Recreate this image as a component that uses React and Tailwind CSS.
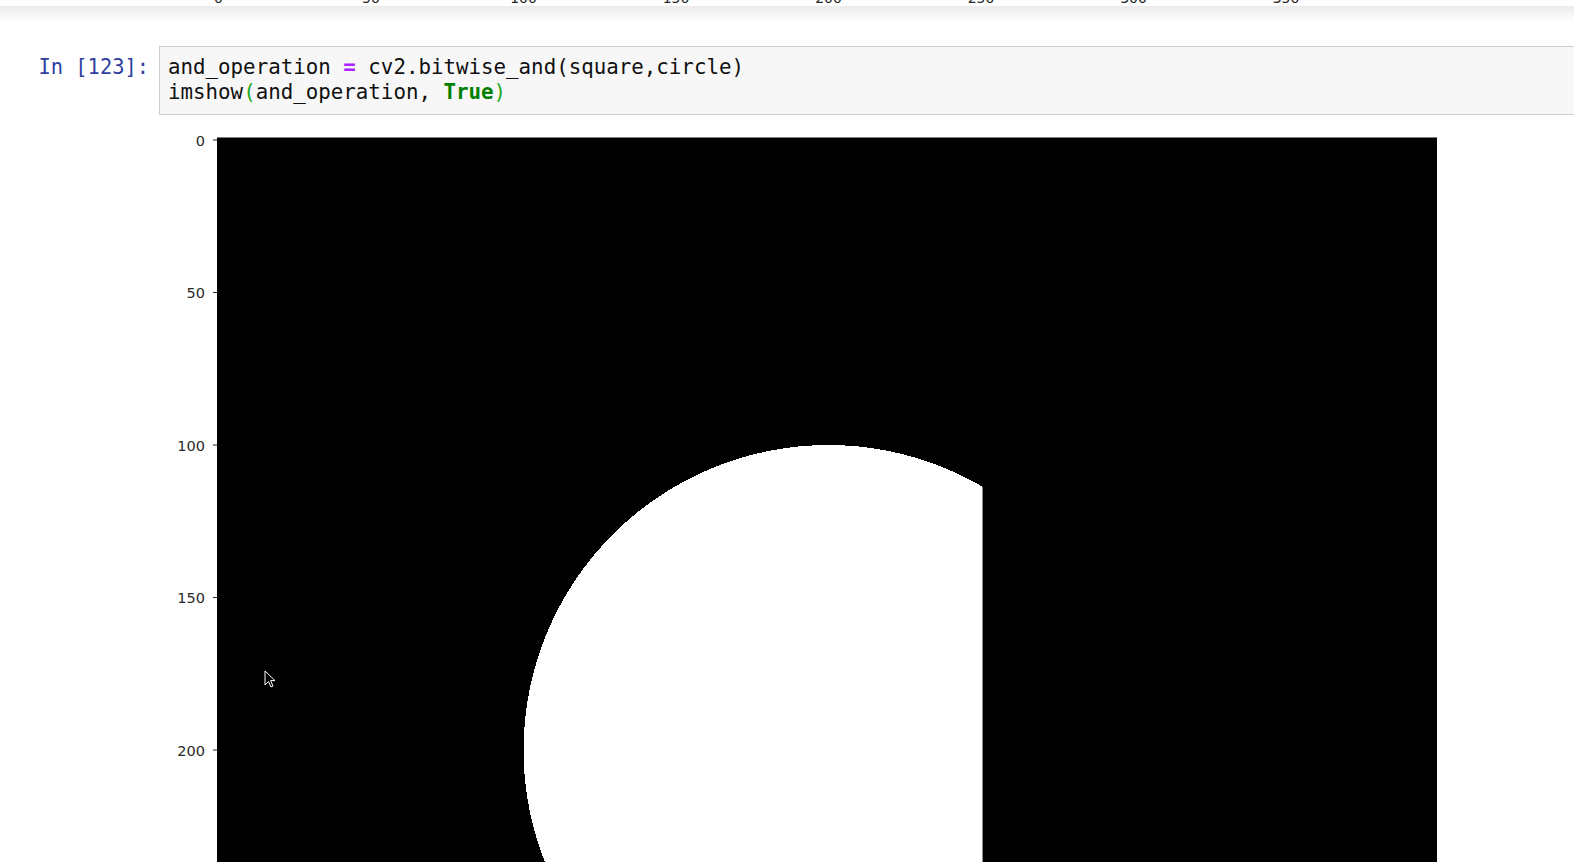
import React from "react";

const S = 3.05;
const OX = 217;
const OY = 138.5; // page y of image row 0 top edge
const SVG_TOP = 125;

function TopStrip() {
  const xs = [0, 50, 100, 150, 200, 250, 300, 350];
  return (
    <div className="h-[6px] overflow-hidden bg-white">
      <svg width="1574" height="6" className="block">
        {xs.map((v) => (
          <text
            key={v}
            x={OX + (v + 0.5) * S}
            y={5.8}
            textAnchor="middle"
            fontFamily="DejaVu Sans, sans-serif"
            fontSize="14"
            fill="#262626"
            transform={`translate(0 -3)`}
          >
            {v}
          </text>
        ))}
      </svg>
    </div>
  );
}

function Plot() {
  const ticks = [0, 50, 100, 150, 200];
  const top = OY - SVG_TOP;
  const cx = OX + 200.5 * S;
  const cy = top + 200.5 * S;
  return (
    <svg width="1574" height="737" className="block">
      <defs>
        <clipPath id="sq">
          <rect x={OX + 50 * S} y={top + 50 * S} width={201 * S} height={201 * S} />
        </clipPath>
      </defs>
      <rect x={OX} y={top - 1} width={400 * S} height={400 * S + 1} fill="#000" />
      <circle cx={cx} cy={cy} r={100 * S} fill="#fff" clipPath="url(#sq)" shapeRendering="crispEdges" />
      {ticks.map((t) => {
        const y = top + (t + 0.5) * S;
        return (
          <g key={t}>
            <line x1={OX - 4} x2={OX} y1={y} y2={y} stroke="#222" strokeWidth="1" />
            <text
              x={205}
              y={y + 5.5}
              textAnchor="end"
              fontFamily="DejaVu Sans, sans-serif"
              fontSize="14.5"
              fill="#2a2a2a"
            >
              {t}
            </text>
          </g>
        );
      })}
    </svg>
  );
}

export default function App() {
  const mono = { fontFamily: '"DejaVu Sans Mono", "Liberation Mono", monospace' };
  return (
    <div className="relative w-[1574px] h-[862px] overflow-hidden bg-white">
      <TopStrip />
      <div className="h-[16px] bg-linear-to-b from-[#ebebeb] to-white" />
      <div className="mt-[24px] flex items-start">
        <div
          className="w-[159px] pr-[10px] pt-[9px] text-right text-[20.4px] leading-[25px] text-[#303F9F] whitespace-pre"
          style={mono}
        >
          In [123]:
        </div>
        <div className="flex-1 mr-[-12px] border border-[#cfcfcf] bg-[#f7f7f7] pl-[8px] pt-[8px] pb-[9px]">
          <div className="text-[20.8px] leading-[25px] text-[#111] whitespace-pre" style={mono}>
            <div>
              and_operation <span className="font-bold text-[#AA22FF]">=</span> cv2.bitwise_and(square,circle)
            </div>
            <div>
              imshow<span className="text-[#22aa22]">(</span>and_operation,{" "}
              <span className="font-bold text-[#008000]">True</span>
              <span className="text-[#22aa22]">)</span>
            </div>
          </div>
        </div>
      </div>
      <div className="mt-[10px]">
        <Plot />
      </div>
      <svg
        className="absolute left-[264px] top-[670px]"
        width="14"
        height="20"
        viewBox="0 0 14 20"
      >
        <path
          d="M1 1 L1 15 L4.5 11.5 L7 17 L9 16 L6.6 10.6 L11 10.6 Z"
          fill="#000"
          stroke="#fff"
          strokeWidth="1"
          strokeLinejoin="miter"
        />
      </svg>
    </div>
  );
}
